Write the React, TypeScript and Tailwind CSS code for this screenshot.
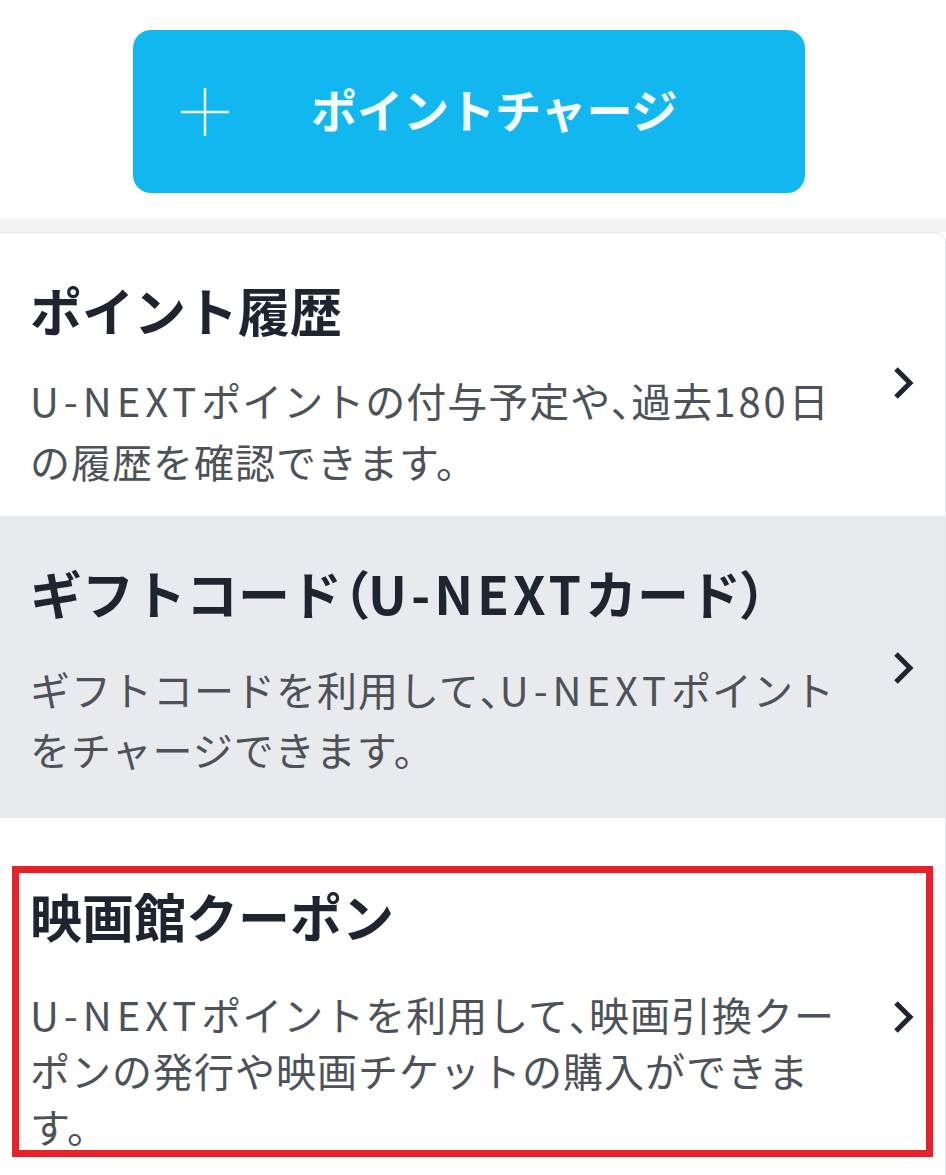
import React from "react";

type Item = {
  title: string;
  lines: string[];
  bg: string;
  pad: string;
  gap: string;
  leading: string;
  highlight?: boolean;
};

const items: Item[] = [
  {
    title: "ポイント履歴",
    lines: ["U-NEXTポイントの付与予定や、過去180日", "の履歴を確認できます。"],
    bg: "bg-white",
    pad: "pt-[41px] pb-[24px]",
    gap: "mt-[24px]",
    leading: "leading-[61px]",
  },
  {
    title: "ギフトコード（U-NEXTカード）",
    lines: ["ギフトコードを利用して、U-NEXTポイント", "をチャージできます。"],
    bg: "bg-[#e8eaed]",
    pad: "pt-[41px] pb-[39px]",
    gap: "mt-[30px]",
    leading: "leading-[60px]",
  },
  {
    title: "映画館クーポン",
    lines: [
      "U-NEXTポイントを利用して、映画引換クー",
      "ポンの発行や映画チケットの購入ができま",
      "す。",
    ],
    bg: "bg-white",
    pad: "pt-[62px] pb-[25px]",
    gap: "mt-[34px]",
    leading: "leading-[56px]",
    highlight: true,
  },
];

// squeeze punctuation and open up the latin runs the way the app renders them
const Text = ({ s, latin }: { s: string; latin: string }) => (
  <>
    {s.split(/(U-NEXT|180|、|（|）)/).map((part, i) => {
      if (part === "U-NEXT") return <span key={i} className={latin}>{part}</span>;
      if (part === "180") return <span key={i} className="tracking-[3px]">{part}</span>;
      if (part === "、" || part === "（" || part === "）")
        return <span key={i} className="[font-feature-settings:'palt'] tracking-normal">{part}</span>;
      return part ? <React.Fragment key={i}>{part}</React.Fragment> : null;
    })}
  </>
);

const Chevron = () => (
  <svg width="26" height="34" viewBox="0 0 26 34" fill="none">
    <polyline points="6,3 20,17 6,31" stroke="#1e2430" strokeWidth="5" />
  </svg>
);

const Row = ({ item }: { item: Item }) => (
  <div className={`relative flex items-center ${item.bg} ${item.pad} pl-[30px] pr-[29px]`}>
    <div className="flex-1">
      <h3 className="text-[52px] leading-[72px] font-bold text-[#1e2430] whitespace-nowrap">
        <Text s={item.title} latin="tracking-[4px]" />
      </h3>
      <p className={`${item.gap} ${item.leading} text-[40px] text-[#4d5259] whitespace-nowrap tracking-[1px]`}>
        {item.lines.map((l) => (
          <span key={l} className="block">
            <Text s={l} latin="tracking-[5px]" />
          </span>
        ))}
      </p>
    </div>
    <Chevron />
    {item.highlight && (
      <div className="absolute left-[12px] top-[48px] w-[921px] h-[291px] border-[7px] border-[#e8202a] pointer-events-none" />
    )}
  </div>
);

export default function App() {
  return (
    <div
      className="w-[946px] h-[1175px] bg-white overflow-hidden"
      style={{ fontFamily: '"Noto Sans CJK JP", "Noto Sans", sans-serif' }}
    >
      <div className="pt-[30px] pb-[25px] pl-[133px]">
        <button className="w-[672px] h-[163px] rounded-[18px] bg-[#13b7f0] flex items-center pl-[48px] gap-[82px] text-white">
          <svg width="48" height="48" viewBox="0 0 48 48">
            <line x1="24" y1="0" x2="24" y2="48" stroke="#eefcff" strokeWidth="2.5" />
            <line x1="0" y1="24" x2="48" y2="24" stroke="#eefcff" strokeWidth="2.5" />
          </svg>
          <span className="text-[46px] font-bold leading-none pb-[8px] text-[#f2fdff]">ポイントチャージ</span>
        </button>
      </div>
      <div className="h-[14px] bg-[#f3f4f6]" />
      <div className="border-t border-r border-[#e3e5e8] rounded-tr-[12px] overflow-hidden">
        {items.map((it) => (
          <Row key={it.title} item={it} />
        ))}
      </div>
    </div>
  );
}
